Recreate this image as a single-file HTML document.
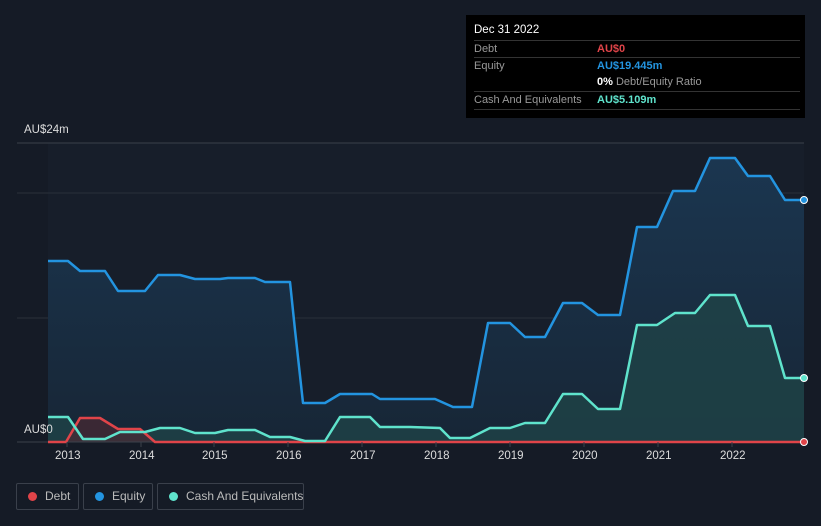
<!DOCTYPE html><html><head><style>
body{margin:0;background:#151b26;width:821px;height:526px;overflow:hidden;font-family:"Liberation Sans",sans-serif;position:relative}
.tt{position:absolute;left:466px;top:15px;width:339px;height:103px;background:#000;font-size:11px}
.tt .h{position:absolute;left:8px;top:9px;color:#fff;font-size:11.5px}
.row{position:absolute;left:8px;width:326px;border-top:1px solid #333;height:16px;line-height:16px;color:#999;white-space:nowrap}
.row span{position:absolute;left:123px;font-weight:bold}
.lg{position:absolute;top:483px;height:27px;border:1px solid #3a404b;border-radius:2px;color:#bbb;font-size:12px;line-height:25px;box-sizing:border-box;white-space:nowrap}
.lg i{position:absolute;left:11px;top:8px;width:9px;height:9px;border-radius:50%}
.ax{position:absolute;color:#ddd;font-size:11.5px}
</style></head><body>
<svg width="821" height="526" style="position:absolute;left:0;top:0">
<defs><linearGradient id="g" x1="0" y1="0" x2="0" y2="1"><stop offset="0" stop-color="#1b3650"/><stop offset="1" stop-color="#172636"/></linearGradient></defs>
<rect x="48" y="143" width="756" height="299" fill="#171e2a"/>
<line x1="17" y1="143" x2="804" y2="143" stroke="#3a404b"/>
<line x1="17" y1="193" x2="804" y2="193" stroke="#2a303b"/>
<line x1="17" y1="318" x2="804" y2="318" stroke="#2a303b"/>
<path d="M48,261 L68,261 80,271 105,271 118,291 145,291 158,275 180,275 195,279 220,279 228,278 255,278 265,282 290,282 295,330 303,403 325,403 340,394 372,394 380,399 435,399 453,407 472,407 488,323 510,323 525,337 545,337 563,303 582,303 598,315 620,315 637,227 657,227 673,191 695,191 710,158 735,158 748,176 770,176 785,200 804,200 L804,442 L48,442Z" fill="url(#g)"/>
<path d="M48,417 L68,417 83,439 105,439 120,432 145,432 160,428 180,428 195,433 215,433 228,430 255,430 270,437 290,437 305,441 325,441 340,417 370,417 380,427 410,427 440,428 450,438 470,438 490,428 510,428 525,423 545,423 563,394 582,394 598,409 620,409 637,325 657,325 675,313 695,313 710,295 735,295 748,326 770,326 785,378 804,378 L804,442 L48,442Z" fill="#1f4347" opacity="0.8"/>
<path d="M66,442 L80,418 100,418 118,429 140,429 155,442Z" fill="#4a2a33" opacity="0.7"/>
<line x1="17" y1="442" x2="804" y2="442" stroke="#3a404b"/>
<g fill="none" stroke-width="2.5" stroke-linejoin="round">
<polyline stroke="#2394e0" points="48,261 68,261 80,271 105,271 118,291 145,291 158,275 180,275 195,279 220,279 228,278 255,278 265,282 290,282 295,330 303,403 325,403 340,394 372,394 380,399 435,399 453,407 472,407 488,323 510,323 525,337 545,337 563,303 582,303 598,315 620,315 637,227 657,227 673,191 695,191 710,158 735,158 748,176 770,176 785,200 804,200"/>
<polyline stroke="#e04449" points="48,442 66,442 80,418 100,418 118,429 140,429 155,442 804,442"/>
<polyline stroke="#5fe3cc" points="48,417 68,417 83,439 105,439 120,432 145,432 160,428 180,428 195,433 215,433 228,430 255,430 270,437 290,437 305,441 325,441 340,417 370,417 380,427 410,427 440,428 450,438 470,438 490,428 510,428 525,423 545,423 563,394 582,394 598,409 620,409 637,325 657,325 675,313 695,313 710,295 735,295 748,326 770,326 785,378 804,378"/>
</g>
<circle cx="804" cy="200" r="3.5" fill="#2394e0" stroke="#fff" stroke-width="1"/>
<circle cx="804" cy="378" r="3.5" fill="#5fe3cc" stroke="#fff" stroke-width="1"/>
<circle cx="804" cy="442" r="3.5" fill="#e04449" stroke="#fff" stroke-width="1"/>
<g stroke="#3a404b"><line x1="67" y1="442" x2="67" y2="447"/><line x1="141" y1="442" x2="141" y2="447"/><line x1="214" y1="442" x2="214" y2="447"/><line x1="288" y1="442" x2="288" y2="447"/><line x1="362" y1="442" x2="362" y2="447"/><line x1="436" y1="442" x2="436" y2="447"/><line x1="510" y1="442" x2="510" y2="447"/><line x1="584" y1="442" x2="584" y2="447"/><line x1="658" y1="442" x2="658" y2="447"/><line x1="732" y1="442" x2="732" y2="447"/></g>
</svg>
<div class="ax" style="left:24px;top:124px">AU$24m</div>
<div class="ax" style="left:24px;top:424px">AU$0</div>
<div class="ax" style="left:55px;top:450px">2013</div><div class="ax" style="left:129px;top:450px">2014</div><div class="ax" style="left:202px;top:450px">2015</div><div class="ax" style="left:276px;top:450px">2016</div><div class="ax" style="left:350px;top:450px">2017</div><div class="ax" style="left:424px;top:450px">2018</div><div class="ax" style="left:498px;top:450px">2019</div><div class="ax" style="left:572px;top:450px">2020</div><div class="ax" style="left:646px;top:450px">2021</div><div class="ax" style="left:720px;top:450px">2022</div>
<div class="tt">
<div class="h">Dec 31 2022</div>
<div class="row" style="top:25px">Debt<span style="color:#e04449">AU$0</span></div>
<div class="row" style="top:42px">Equity<span style="color:#2394e0">AU$19.445m</span></div>
<div class="row" style="top:59px;border-top:none"><span style="color:#fff">0% <b style="color:#999;font-weight:normal">Debt/Equity Ratio</b></span></div>
<div class="row" style="top:76px">Cash And Equivalents<span style="color:#5fe3cc">AU$5.109m</span></div>
<div class="row" style="top:94px;height:0"></div>
</div>
<div class="lg" style="left:16px;width:63px"><i style="background:#e04449"></i><span style="position:absolute;left:28px">Debt</span></div>
<div class="lg" style="left:83px;width:70px"><i style="background:#2394e0"></i><span style="position:absolute;left:28px">Equity</span></div>
<div class="lg" style="left:157px;width:147px"><i style="background:#5fe3cc"></i><span style="position:absolute;left:28px">Cash And Equivalents</span></div>
</body></html>
